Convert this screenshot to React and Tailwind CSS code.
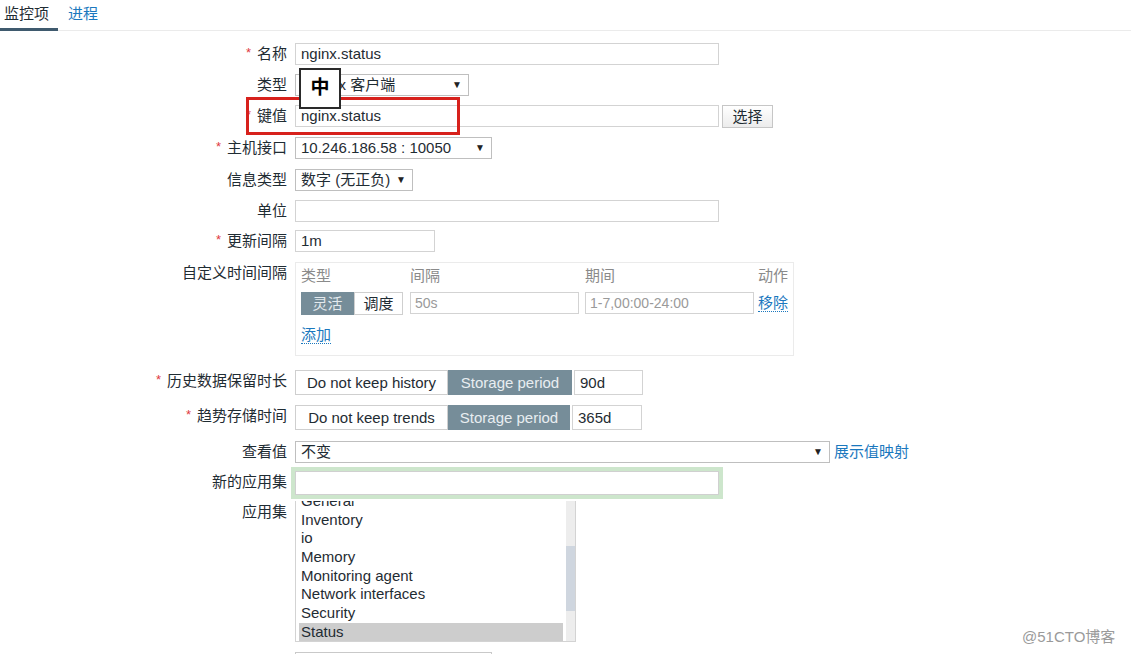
import React from "react";

const FONT = "font-['Liberation_Sans','Noto_Sans_CJK_SC',sans-serif]";

function Star() {
  return <span className="text-[#e0393e] text-[13px] mr-[6px] relative -top-[2px]">*</span>;
}

function Row({ label, req, mt, children }) {
  return (
    <div className={`flex items-start gap-[8px] ${mt}`}>
      <div className="w-[287px] shrink-0 text-right leading-[22px] text-[15px] text-[#1f2c33] whitespace-nowrap">
        {req && <Star />}
        {label}
      </div>
      {children}
    </div>
  );
}

function Input({ w, children, cls = "" }) {
  return (
    <div className={`h-[22px] border border-[#d3d3d3] bg-white pl-[5px] text-[15px] leading-[20px] text-[#1f2c33] whitespace-nowrap overflow-hidden ${w} ${cls}`}>
      {children}
    </div>
  );
}

function Select({ w, children }) {
  return (
    <div className={`h-[22px] border border-[#bfbfbf] bg-white pl-[5px] pr-[6px] flex items-center justify-between text-[15px] leading-[20px] text-[#1f2c33] whitespace-nowrap overflow-hidden ${w}`}>
      <span>{children}</span>
      <span className="text-[10px] text-[#222]">▼</span>
    </div>
  );
}

const apps = ["General", "Inventory", "io", "Memory", "Monitoring agent", "Network interfaces", "Security", "Status"];

export default function App() {
  return (
    <div className={`relative w-[1131px] h-[654px] overflow-hidden bg-white ${FONT}`}>
      {/* tabs */}
      <div className="h-[31px] border-b border-[#ebebeb] flex items-start">
        <div className="w-[58px] h-[31px] border-b-[3px] border-[#3f5a6e] pl-[4px] text-[15px] leading-[28px] text-[#1f2c33]">监控项</div>
        <div className="ml-[10px] text-[15px] leading-[28px] text-[#1b78be]">进程</div>
      </div>

      <Row label="名称" req mt="mt-[12px]">
        <Input w="w-[424px]" cls="border-[#6b97ae] bg-[#fffffa]">nginx.status</Input>
      </Row>
      <Row label="类型" mt="mt-[8px]">
        <Select w="w-[174px]">Zabbix 客户端</Select>
      </Row>
      <Row label="键值" req mt="mt-[9px]">
        <Input w="w-[424px]">nginx.status</Input>
        <div className="-ml-[5px] h-[23px] w-[51px] border border-[#c6c6c6] bg-gradient-to-b from-white to-[#ececec] text-center text-[15px] leading-[21px] text-[#1f2c33]">选择</div>
      </Row>
      <Row label="主机接口" req mt="mt-[9px]">
        <Select w="w-[197px]">10.246.186.58 : 10050</Select>
      </Row>
      <Row label="信息类型" mt="mt-[9px]">
        <Select w="w-[118px]">数字 (无正负)</Select>
      </Row>
      <Row label="单位" mt="mt-[9px]">
        <Input w="w-[424px]"></Input>
      </Row>
      <Row label="更新间隔" req mt="mt-[8px]">
        <Input w="w-[140px]">1m</Input>
      </Row>
      <Row label="自定义时间间隔" mt="mt-[9px]">
        <div className="w-[499px] h-[94px] border border-[#ebebeb] px-[5px] pt-[3px]">
          <div className="flex text-[15px] text-[#8a8a8a] leading-[20px] whitespace-nowrap">
            <div className="w-[109px]">类型</div>
            <div className="w-[175px]">间隔</div>
            <div className="w-[169px]">期间</div>
            <div className="flex-1 text-right">动作</div>
          </div>
          <div className="mt-[6px] flex items-start whitespace-nowrap">
            <div className="flex h-[23px] text-[15px] leading-[21px]">
              <div className="w-[53px] bg-[#768d99] border border-[#768d99] text-center text-[#e4eaee]">灵活</div>
              <div className="w-[49px] border border-[#cfcfcf] text-center text-[#1f2c33]">调度</div>
            </div>
            <div className="ml-[7px] w-[169px] h-[22px] border border-[#d3d3d3] pl-[4px] text-[14px] leading-[20px] text-[#9a9a9a]">50s</div>
            <div className="ml-[6px] w-[169px] h-[22px] border border-[#d3d3d3] pl-[4px] text-[14px] leading-[20px] text-[#9a9a9a]">1-7,00:00-24:00</div>
            <div className="flex-1 text-right text-[15px] leading-[21px]">
              <span className="text-[#1b78be] border-b border-dotted border-[#1b78be]">移除</span>
            </div>
          </div>
          <div className="mt-[11px] text-[15px] leading-[18px]">
            <span className="text-[#1b78be] border-b border-dotted border-[#1b78be]">添加</span>
          </div>
        </div>
      </Row>
      <Row label="历史数据保留时长" req mt="mt-[14px]">
        <div className="flex items-start">
          <div className="flex h-[25px] text-[15px] leading-[23px] whitespace-nowrap">
            <div className="w-[153px] border border-[#cfcfcf] text-center text-[#1f2c33]">Do not keep history</div>
            <div className="w-[124px] bg-[#768d99] border border-[#768d99] text-center text-[#e8eef1]">Storage period</div>
          </div>
          <div className="ml-[2px] w-[69px] h-[25px] border border-[#d3d3d3] pl-[5px] text-[15px] leading-[23px] text-[#1f2c33]">90d</div>
        </div>
      </Row>
      <Row label="趋势存储时间" req mt="mt-[10px]">
        <div className="flex items-start">
          <div className="flex h-[25px] text-[15px] leading-[23px] whitespace-nowrap">
            <div className="w-[153px] border border-[#cfcfcf] text-center text-[#1f2c33]">Do not keep trends</div>
            <div className="w-[122px] bg-[#768d99] border border-[#768d99] text-center text-[#e8eef1]">Storage period</div>
          </div>
          <div className="ml-[2px] w-[70px] h-[25px] border border-[#d3d3d3] pl-[5px] text-[15px] leading-[23px] text-[#1f2c33]">365d</div>
        </div>
      </Row>
      <Row label="查看值" mt="mt-[11px]">
        <Select w="w-[535px]">不变</Select>
        <div className="-ml-[4px] text-[15px] leading-[22px] text-[#1b78be]">展示值映射</div>
      </Row>
      <Row label="新的应用集" mt="mt-[8px]">
        <div className="w-[424px] h-[24px] border border-[#d0d0d0] bg-white shadow-[0_0_0_4px_#cde6cc]"></div>
      </Row>
      <Row label="应用集" mt="mt-[6px]">
        <div className="relative w-[281px] h-[141px] border border-[#d3d3d3] border-t-0 overflow-hidden bg-white">
          <div className="-mt-[9px] ml-[3px] mr-[12px]">
            {apps.map((a) => (
              <div
                key={a}
                className={`h-[18.7px] leading-[18.7px] pl-[2px] text-[15px] text-[#1f2c33] ${a === "Status" ? "bg-[#cdcdcd]" : ""}`}
              >
                {a}
              </div>
            ))}
          </div>
          <div className="absolute right-0 top-0 bottom-0 w-[9px] bg-[#ededed]">
            <div className="absolute left-0 right-0 top-[45px] h-[65px] bg-[#cfd6df]"></div>
          </div>
        </div>
      </Row>
      <Row label="" mt="mt-[10px]">
        <div className="w-[197px] h-[22px] border border-[#c9c9c9]"></div>
      </Row>

      {/* overlays */}
      <div className="absolute left-[246px] top-[97px] w-[214px] h-[38px] border-[3px] border-[#d7211c]"></div>
      <div className="absolute left-[299px] top-[68px] w-[42px] h-[41px] border-2 border-[#2a2a2a] bg-white flex items-center justify-center text-[19px] font-bold text-black">中</div>
      <div className="absolute left-[1022px] top-[627px] text-[15px] text-[#9a9a9a] leading-[20px]">@51CTO博客</div>
    </div>
  );
}
